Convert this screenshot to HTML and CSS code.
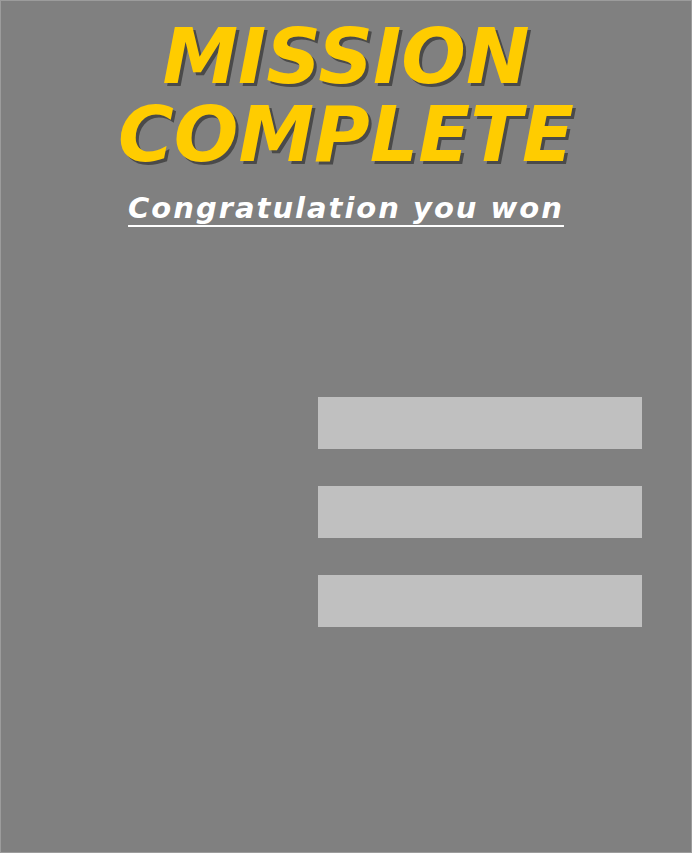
FILE: index.html
```html
<!DOCTYPE html>
<html lang="en">
<head>
<meta charset="utf-8">
<title>Mission Complete</title>
<link rel="stylesheet" href="styles.css">
</head>
<body>
<div class="screen">
  <h1 class="title">MISSION<br>COMPLETE</h1>
  <p class="subtitle">Congratulation you won</p>
  <div class="bars">
    <div class="bar"></div>
    <div class="bar"></div>
    <div class="bar"></div>
  </div>
</div>
</body>
</html>
```

FILE: styles.css
```css
html, body {
  margin: 0;
  padding: 0;
  background: #808080;
}
.screen {
  box-sizing: border-box;
  width: 692px;
  height: 853px;
  background: #808080;
  border: 1px solid #9c9c9c;
  padding-top: 17px;
  display: flex;
  flex-direction: column;
  align-items: center;
  font-family: "DejaVu Sans", sans-serif;
}
.title {
  margin: 0;
  font-size: 76px;
  line-height: 78px;
  font-weight: bold;
  font-style: oblique;
  color: #ffcc00;
  text-align: center;
  text-shadow: 3px 3px 0 #4a4a4a;
}
.subtitle {
  margin: 18px 0 0;
  font-size: 29px;
  line-height: 32px;
  font-weight: bold;
  font-style: oblique;
  letter-spacing: 2px;
  color: #ffffff;
  text-decoration: underline;
  text-decoration-thickness: 2px;
  text-underline-offset: 7px;
}
.bars {
  align-self: stretch;
  margin-top: 173px;
  padding-right: 49px;
  display: flex;
  flex-direction: column;
  align-items: flex-end;
  gap: 37px;
}
.bar {
  width: 324px;
  height: 52px;
  background: #c0c0c0;
}
```
